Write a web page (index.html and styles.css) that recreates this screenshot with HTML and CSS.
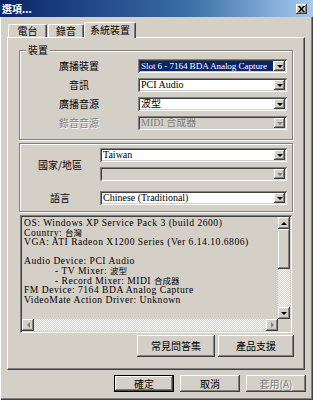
FILE: index.html
```html
<!DOCTYPE html>
<html lang="zh-Hant">
<head>
  <meta charset="UTF-8" />
  <title>選項...</title>
  <link rel="stylesheet" href="styles.css">
</head>
<body>
  <div class="window">
    <div class="titlebar">
      <span class="title">選項...</span>
      <span class="close-btn">
        <svg width="7" height="6" viewBox="0 0 7 6"><path d="M0 0h2l1.5 2 1.5-2h2l-2.5 3 2.5 3h-2l-1.5-2-1.5 2h-2l2.5-3z" fill="#000"/></svg>
      </span>
    </div>

    <div class="tabs">
      <div class="tab tab-radio">電台</div>
      <div class="tab tab-record">錄音</div>
      <div class="tab tab-system active">系統裝置</div>
    </div>

    <div class="panel">
      <fieldset class="group group-device">
        <legend>裝置</legend>
        <div class="row">
          <label>廣播裝置</label>
          <div class="combo"><span class="value selected">Slot 6 - 7164 BDA Analog Capture</span><span class="drop"></span></div>
        </div>
        <div class="row">
          <label>音訊</label>
          <div class="combo"><span class="value">PCI Audio</span><span class="drop"></span></div>
        </div>
        <div class="row">
          <label>廣播音源</label>
          <div class="combo"><span class="value">波型</span><span class="drop"></span></div>
        </div>
        <div class="row">
          <label class="disabled">錄音音源</label>
          <div class="combo disabled"><span class="value">MIDI 合成器</span><span class="drop"></span></div>
        </div>
      </fieldset>

      <fieldset class="group group-region">
        <div class="row row-tall">
          <label>國家/地區</label>
          <div class="combo-stack">
            <div class="combo"><span class="value">Taiwan</span><span class="drop"></span></div>
            <div class="combo disabled"><span class="value"></span><span class="drop"></span></div>
          </div>
        </div>
        <div class="row">
          <label>語言</label>
          <div class="combo"><span class="value">Chinese (Traditional)</span><span class="drop"></span></div>
        </div>
      </fieldset>

      <div class="infobox">
        <div class="info-text">
          <div>OS: Windows XP Service Pack 3 (build 2600)</div>
          <div>Country: <span class="cjk">台灣</span></div>
          <div>VGA: ATI Radeon X1200 Series (Ver 6.14.10.6806)</div>
          <div class="blank"></div>
          <div>Audio Device: PCI Audio</div>
          <div class="indent">- TV Mixer: <span class="cjk">波型</span></div>
          <div class="indent">- Record Mixer: MIDI <span class="cjk">合成器</span></div>
          <div>FM Device: 7164 BDA Analog Capture</div>
          <div>VideoMate Action Driver: Unknown</div>
        </div>
        <div class="vscroll">
          <span class="sb-btn arrow-up"></span>
          <span class="sb-thumb"></span>
          <span class="sb-track"></span>
          <span class="sb-btn arrow-down"></span>
        </div>
        <div class="hscroll">
          <span class="sb-btn arrow-left"></span>
          <span class="sb-track"></span>
          <span class="sb-btn arrow-right"></span>
        </div>
        <div class="corner"></div>
      </div>

      <div class="panel-buttons">
        <button class="btn btn-faq">常見問答集</button>
        <button class="btn btn-support">產品支援</button>
      </div>
    </div>

    <div class="dialog-buttons">
      <button class="btn btn-ok">確定</button>
      <button class="btn btn-cancel">取消</button>
      <button class="btn btn-apply" disabled>套用(A)</button>
    </div>
  </div>
</body>
</html>
```

FILE: styles.css
```css
* {
  box-sizing: border-box;
}

body {
  margin: 0;
  background: #d4d0c8;
  font-family: "Noto Sans CJK TC", "Noto Sans CJK SC", sans-serif;
  font-size: 10px;
  color: #000;
}

.window {
  width: 313px;
  height: 400px;
  background: #d4d0c8;
  overflow: hidden;
  box-shadow: inset 1px 0 #fff, inset -1px -1px #404040, inset -2px -2px #808080;
}

/* title bar */
.titlebar {
  height: 17px;
  display: flex;
  align-items: center;
  justify-content: space-between;
  padding: 0 6px 0 2px;
  background: linear-gradient(to right, #0a246a, #3a6ea5 60%, #a6caf0);
}

.title {
  color: #fff;
  font-weight: bold;
  font-size: 10px;
  line-height: 12px;
}

.close-btn {
  width: 11px;
  height: 10px;
  display: flex;
  align-items: center;
  justify-content: center;
  background: #d4d0c8;
  box-shadow: inset -1px -1px #404040, inset 1px 1px #fff, inset -2px -2px #808080;
}

/* tabs */
.tabs {
  height: 20px;
  display: flex;
  align-items: flex-end;
  padding-left: 8px;
}

.tab {
  height: 13px;
  line-height: 12px;
  text-align: center;
  font-size: 10px;
  background: #d4d0c8;
  border-top: 1px solid #fff;
  border-left: 1px solid #fff;
  border-right: 1px solid #404040;
  border-radius: 2px 2px 0 0;
  box-shadow: inset -1px 0 #808080;
}

.tab-radio {
  width: 39px;
}

.tab-record {
  width: 36px;
  margin-left: 1px;
}

.tab-system {
  width: 52px;
}

.tab.active {
  height: 16px;
  line-height: 14px;
  margin-bottom: -1px;
  position: relative;
  z-index: 1;
}

/* panel */
.panel {
  width: 298px;
  height: 333px;
  margin-left: 7px;
  padding: 6px 11px 0 11px;
  border-top: 1px solid #fff;
  border-left: 1px solid #fff;
  border-right: 1px solid #404040;
  border-bottom: 1px solid #404040;
  box-shadow: inset -1px -1px #808080;
}

.group {
  width: 274px;
  margin: 0;
  padding: 3px 5px 9px 0;
  border: 1px solid #808080;
  box-shadow: inset 1px 1px #fff, 1px 1px #fff;
  min-width: 0;
}

.group legend {
  margin-left: 6px;
  padding: 0 2px;
  line-height: 12px;
  font-size: 10px;
  background: #d4d0c8;
}

.group-device {
  display: flex;
  flex-direction: column;
}

.group-region {
  margin-top: 3px;
  padding: 4px 5px 6px 0;
}

.row {
  display: flex;
  align-items: center;
  margin-bottom: 5px;
}

.row:last-child {
  margin-bottom: 0;
}

.row label {
  flex: 1;
  text-align: center;
  font-size: 10px;
  line-height: 12px;
}

label.disabled {
  color: #808080;
  text-shadow: 1px 1px #fff;
}

.group-device .combo {
  width: 149px;
}

.group-region .combo,
.group-region .combo-stack {
  width: 187px;
}

.row-tall {
  margin-bottom: 10px;
}

.combo-stack {
  display: flex;
  flex-direction: column;
  gap: 5px;
}

/* combo box */
.combo {
  height: 14px;
  display: flex;
  padding: 2px;
  background: #fff;
  box-shadow: inset 1px 1px #808080, inset -1px -1px #fff, inset 2px 2px #404040, inset -2px -2px #d4d0c8;
}

.combo .value {
  flex: 1;
  min-width: 0;
  padding: 0 1px;
  font-family: "Liberation Serif", "Noto Sans CJK TC", serif;
  font-size: 10px;
  line-height: 10px;
  white-space: nowrap;
  overflow: hidden;
}

.combo .value.selected {
  background: #0a246a;
  color: #fff;
  margin-right: 1px;
  font-size: 9.2px;
  letter-spacing: -0.1px;
}

.combo .drop {
  width: 11px;
  display: flex;
  align-items: center;
  justify-content: center;
  background: #d4d0c8;
  box-shadow: inset -1px -1px #404040, inset 1px 1px #fff, inset -2px -2px #808080;
}

.combo .drop::after {
  content: "";
  border-left: 3px solid transparent;
  border-right: 3px solid transparent;
  border-top: 3px solid #000;
}

.combo.disabled {
  background: #d4d0c8;
}

.combo.disabled .value {
  color: #808080;
}

.combo.disabled .drop::after {
  border-top-color: #808080;
}

/* info box */
.infobox {
  width: 272px;
  height: 118px;
  margin: 3px 0 0 1px;
  padding: 2px;
  display: grid;
  grid-template-columns: 1fr 12px;
  grid-template-rows: 1fr 12px;
  background: #d4d0c8;
  box-shadow: inset 1px 1px #808080, inset -1px -1px #fff, inset 2px 2px #404040, inset -2px -2px #d4d0c8;
}

.info-text {
  min-width: 0;
  padding: 1px 2px;
  font-family: "Liberation Serif", "Noto Sans CJK TC", serif;
  font-size: 9.6px;
  line-height: 9.6px;
  letter-spacing: 0.5px;
  white-space: nowrap;
  overflow: hidden;
}

.info-text div {
  height: 9.6px;
}

.info-text .cjk {
  display: inline-block;
  vertical-align: top;
  height: 9.6px;
  font-family: "Noto Sans CJK TC", sans-serif;
  font-size: 8.5px;
  line-height: 9.6px;
  letter-spacing: 0;
}

.info-text .indent {
  padding-left: 31px;
}

.vscroll {
  display: flex;
  flex-direction: column;
}

.hscroll {
  display: flex;
}

.sb-track {
  flex: 1;
  background: repeating-conic-gradient(#fff 0 25%, #d4d0c8 0 50%) 0 0 / 2px 2px;
}

.sb-btn,
.sb-thumb {
  background: #d4d0c8;
  box-shadow: inset -1px -1px #404040, inset 1px 1px #fff, inset -2px -2px #808080;
}

.sb-btn {
  width: 12px;
  height: 12px;
  display: flex;
  align-items: center;
  justify-content: center;
}

.sb-thumb {
  height: 40px;
}

.sb-btn::after {
  content: "";
}

.arrow-up::after {
  border-left: 3px solid transparent;
  border-right: 3px solid transparent;
  border-bottom: 3px solid #000;
}

.arrow-down::after {
  border-left: 3px solid transparent;
  border-right: 3px solid transparent;
  border-top: 3px solid #000;
}

.arrow-left::after {
  border-top: 3px solid transparent;
  border-bottom: 3px solid transparent;
  border-right: 3px solid #808080;
}

.arrow-right::after {
  border-top: 3px solid transparent;
  border-bottom: 3px solid transparent;
  border-left: 3px solid #808080;
}

.corner {
  background: #d4d0c8;
}

/* buttons */
.btn {
  height: 22px;
  padding: 0;
  border: none;
  background: #d4d0c8;
  font-family: "Noto Sans CJK TC", "Noto Sans CJK SC", sans-serif;
  font-size: 10px;
  line-height: 12px;
  color: #000;
  box-shadow: inset -1px -1px #404040, inset 1px 1px #fff, inset -2px -2px #808080;
}

.panel-buttons {
  display: flex;
  justify-content: flex-end;
  gap: 3px;
  margin: 2px -1px 0 0;
}

.btn-faq {
  width: 78px;
}

.btn-support {
  width: 76px;
}

.dialog-buttons {
  display: flex;
  justify-content: flex-end;
  gap: 6px;
  margin-top: 5px;
  padding-right: 7px;
}

.dialog-buttons .btn {
  height: 17px;
  width: 60px;
}

.btn-ok {
  border: 1px solid #000;
}

.btn-apply {
  color: #808080;
  text-shadow: 1px 1px #fff;
}
```
